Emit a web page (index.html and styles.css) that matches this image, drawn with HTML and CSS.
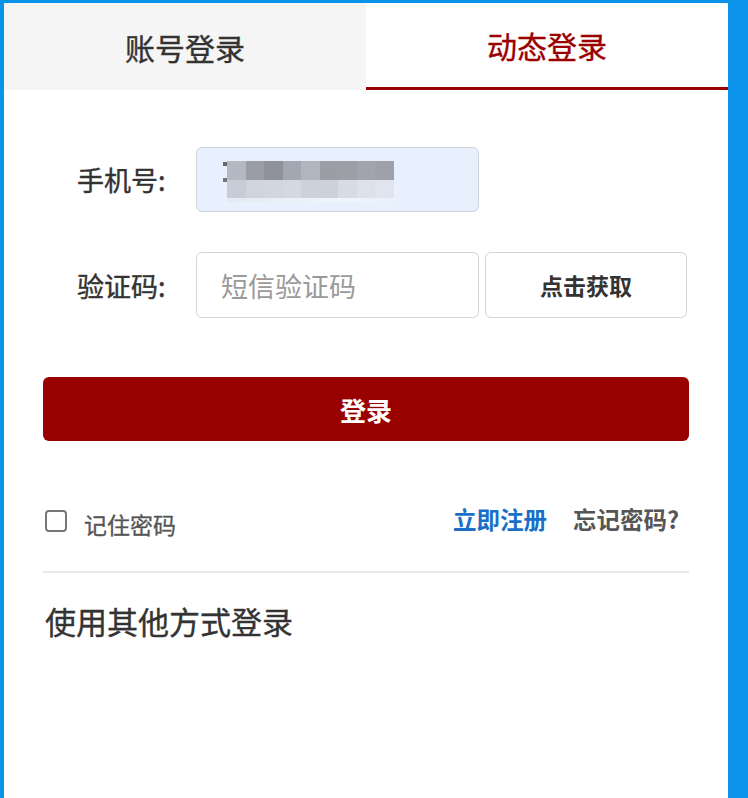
FILE: index.html
```html
<!DOCTYPE html>
<html lang="zh-CN">
<head>
<meta charset="utf-8">
<title>登录</title>
<link rel="stylesheet" href="styles.css">
</head>
<body>
<div class="panel">
  <div class="tabs">
    <div class="tab">账号登录</div>
    <div class="tab active">动态登录</div>
  </div>
  <div class="form">
    <div class="row">
      <label class="label">手机号:</label>
      <div class="field filled">
        <span class="digit"></span>
        <div class="mask">
          <div class="cells top">
            <i class="c1"></i><i class="c2"></i><i class="c3"></i><i class="c4"></i><i class="c5"></i><i class="c6"></i><i class="c7"></i><i class="c8"></i><i class="c9"></i>
          </div>
          <div class="cells bottom">
            <i class="d1"></i><i class="d2"></i><i class="d3"></i><i class="d4"></i><i class="d5"></i><i class="d6"></i><i class="d7"></i><i class="d8"></i><i class="d9"></i>
          </div>
          <div class="streak"></div>
        </div>
      </div>
    </div>
    <div class="row">
      <label class="label">验证码:</label>
      <div class="field"><span class="placeholder">短信验证码</span></div>
      <button class="get-code">点击获取</button>
    </div>
    <button class="submit">登录</button>
    <div class="options">
      <label class="remember"><span class="checkbox"></span><span>记住密码</span></label>
      <div class="links">
        <a class="register">立即注册</a>
        <a class="forgot">忘记密码?</a>
      </div>
    </div>
    <div class="divider"></div>
    <div class="other">使用其他方式登录</div>
  </div>
</div>
</body>
</html>
```
FILE: styles.css
```css
html, body {
  margin: 0;
  padding: 0;
}
body {
  background: #0b93e9;
  font-family: "Noto Sans CJK SC", "Noto Sans", sans-serif;
  color: #333;
  overflow: hidden;
}
.panel {
  margin: 3px 20px 0 4px;
  background: #fff;
  min-height: 795px;
}
.tabs {
  display: flex;
  height: 87px;
}
.tab {
  flex: 1;
  display: flex;
  align-items: center;
  justify-content: center;
  background: #f5f5f5;
  font-size: 30px;
  -webkit-text-stroke: 0.35px currentColor;
  color: #333;
  box-sizing: border-box;
}
.tab.active {
  background: #fff;
  color: #9b0000;
  border-bottom: 3px solid #9b0000;
}
.form {
  padding: 57px 39px 0 39px;
}
.row {
  display: flex;
  align-items: stretch;
  margin-bottom: 40px;
}
.row:nth-child(2) {
  margin-bottom: 59px;
}
.label {
  width: 119px;
  margin-left: 34px;
  display: flex;
  align-items: center;
  font-size: 27px;
  -webkit-text-stroke: 0.4px currentColor;
  color: #333;
}
.field {
  width: 283px;
  height: 66px;
  box-sizing: border-box;
  border: 1.5px solid #d4d4d4;
  border-radius: 6px;
  display: flex;
  align-items: center;
  padding-left: 24px;
  background: #fff;
}
.row:first-child .field {
  height: 65px;
}
.field.filled {
  background: #e8f0fe;
  border-color: #cfd4dc;
  padding-left: 26px;
}
.digit {
  width: 4px;
  height: 36px;
  background: linear-gradient(#444 0 10%, transparent 10% 45%, #555 45% 55%, transparent 55%);
  opacity: 0.8;
}
.mask {
  display: flex;
  flex-direction: column;
  margin-top: 4px;
}
.cells {
  display: flex;
}
.cells i {
  display: block;
  width: 18.5px;
}
.cells.top i { height: 19px; }
.cells.bottom i { height: 18px; }
.c1 { background: #b3b8c2; }
.c2 { background: #9a9da5; }
.c3 { background: #8f9298; }
.c4 { background: #a2a8b1; }
.c5 { background: #b1b5bd; }
.c6 { background: #9b9ea5; }
.c7 { background: #9d9fa7; }
.c8 { background: #a1a4ad; }
.c9 { background: #9ea1a9; }
.d1 { background: #c7ccd6; }
.d2 { background: #cfd4dd; }
.d3 { background: #d1d6df; }
.d4 { background: #d3d8e1; }
.d5 { background: #ccd1db; }
.d6 { background: #ccd1da; }
.d7 { background: #d6dbe5; }
.d8 { background: #dce1ea; }
.d9 { background: #dfe4ee; }
.streak {
  height: 4px;
  width: 185px;
  background: linear-gradient(90deg, #e4e9f2, #f0f4fb 60%, transparent);
}
.placeholder {
  font-size: 27px;
  color: #9a9a9a;
}
.get-code {
  margin-left: 6px;
  width: 202px;
  box-sizing: border-box;
  border: 1.5px solid #d4d4d4;
  border-radius: 6px;
  background: #fff;
  font-family: inherit;
  font-size: 23px;
  font-weight: 700;
  color: #333;
  padding: 0;
}
.submit {
  display: block;
  width: 100%;
  height: 64px;
  border: none;
  border-radius: 6px;
  background: #990000;
  color: #fff;
  font-family: inherit;
  font-size: 26px;
  font-weight: 700;
  padding: 0;
}
.options {
  margin-top: 68px;
  display: flex;
  align-items: center;
  justify-content: space-between;
  height: 24px;
}
.remember {
  display: flex;
  align-items: center;
  font-size: 23px;
  -webkit-text-stroke: 0.3px currentColor;
  color: #555;
}
.remember span:last-child {
  margin-top: 5px;
}
.checkbox {
  width: 22px;
  height: 22px;
  box-sizing: border-box;
  border: 2px solid #777;
  border-radius: 4px;
  margin: 0 17px 0 2px;
}
.links {
  display: flex;
  gap: 26px;
  font-size: 23.5px;
  font-weight: 700;
  margin-top: -4px;
  margin-right: 10px;
}
.register { color: #1a6fc9; }
.forgot { color: #555; }
.divider {
  margin-top: 38px;
  height: 2px;
  background: #e8e8e8;
}
.other {
  margin-top: 25px;
  margin-left: 2px;
  font-size: 31px;
  -webkit-text-stroke: 0.35px currentColor;
  color: #333;
}
```
